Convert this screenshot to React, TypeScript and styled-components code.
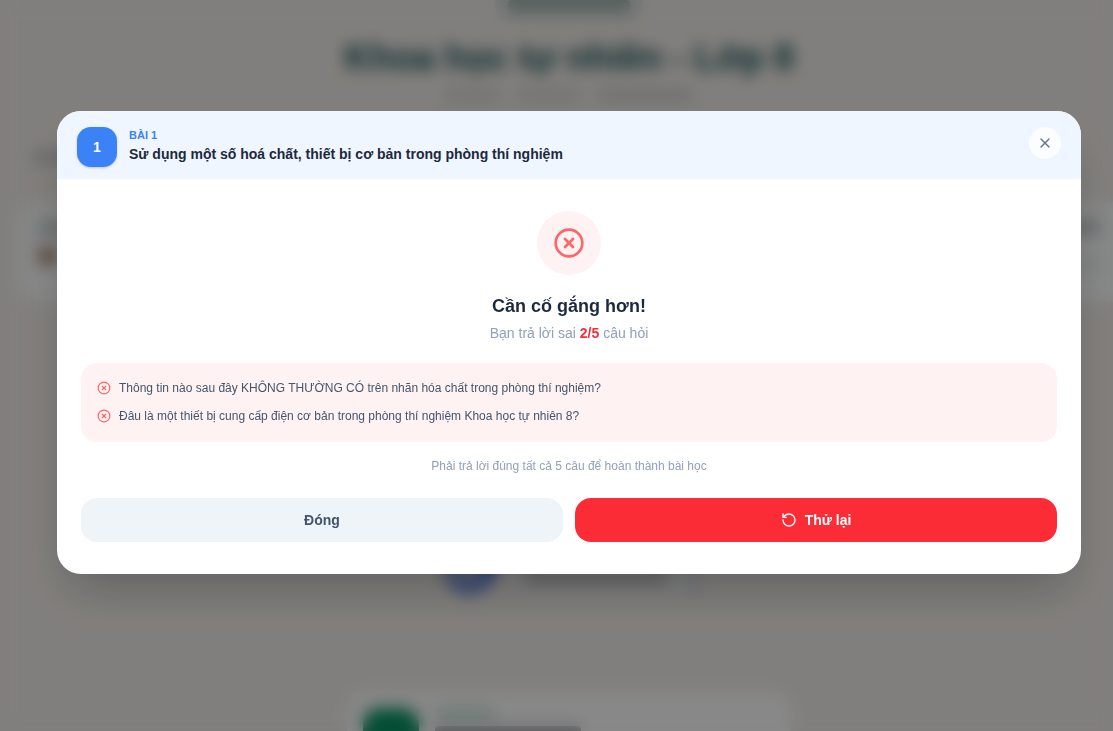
import React from "react";
import styled, { createGlobalStyle } from "styled-components";
import { CircleX, RotateCcw, X } from "lucide-react";

const GlobalStyle = createGlobalStyle`
  *, *::before, *::after { box-sizing: border-box; }
  html, body, #root { height: 100%; }
  body {
    margin: 0;
    overflow: hidden;
    background: #ece8e3;
    font-family: "Liberation Sans", Arial, Helvetica, sans-serif;
    color: #1d293d;
  }
  h1, h2, h3, p, ul { margin: 0; padding: 0; }
  button { font: inherit; border: 0; padding: 0; cursor: pointer; }
`;

const Page = styled.main`
  height: 100%;
  overflow: hidden;
  display: flex;
  flex-direction: column;
  align-items: center;
  padding-left: 25px;
`;

const Badge = styled.div`
  flex: none;
  display: flex;
  justify-content: center;
  width: 148px;
  height: 18px;
  border-radius: 0 0 12px 12px;
  background: #d3dbd8;
`;

const Bar = styled.span<{ $w: number; $h?: number; $color: string }>`
  display: block;
  flex: none;
  width: ${(p) => p.$w}px;
  height: ${(p) => p.$h ?? 10}px;
  border-radius: 4px;
  background: ${(p) => p.$color};
`;

const PageTitle = styled.h1`
  margin-top: 18px;
  font-size: 36px;
  line-height: 44px;
  font-weight: 700;
  white-space: nowrap;
  color: #134e53;
`;

const Meta = styled.div`
  display: flex;
  gap: 14px;
  margin-top: 10px;
`;

const SectionLabel = styled.div`
  align-self: stretch;
  padding: 52px 0 0 8px;
`;

const StatsCard = styled.section`
  align-self: stretch;
  flex: none;
  display: flex;
  justify-content: space-between;
  height: 100px;
  margin: 40px -25px 0 -7px;
  padding: 18px 38px 0 20px;
  border-radius: 20px;
  background: #f6f7f7;
`;

const Stack = styled.div<{ $gap?: number }>`
  display: flex;
  flex-direction: column;
  gap: ${(p) => p.$gap ?? 12}px;
`;

const CurrentLesson = styled.section`
  flex: none;
  display: flex;
  align-items: flex-end;
  gap: 16px;
  width: 256px;
  height: 60px;
  margin-top: 232px;
`;

const Ring = styled.div`
  width: 56px;
  height: 56px;
  border-radius: 50%;
  border: 12px solid #5f83d8;
  border-left-color: #8b9fcb;
  border-right-color: #3f6bdc;
  background: #a9b4cc;
`;

const Bubble = styled.div`
  flex: 1;
  height: 56px;
  padding: 32px 12px 0;
  border-right: 4px solid #b4c2e2;
  background: #e6e7e8;
`;

const NextLesson = styled.section`
  flex: none;
  display: flex;
  gap: 16px;
  width: 444px;
  height: 96px;
  margin-top: 98px;
  padding: 16px;
  border-radius: 20px;
  background: #f8f8f8;
`;

const GreenTile = styled.div`
  width: 56px;
  height: 56px;
  border-radius: 16px;
  background: #0a8f63;
`;

const Overlay = styled.div`
  position: fixed;
  inset: 0;
  display: flex;
  align-items: center;
  justify-content: center;
  padding: 0 32px 46px 57px;
  background: rgba(0, 0, 0, 0.45);
  backdrop-filter: blur(8px);
`;

const Dialog = styled.section`
  width: 100%;
  max-width: 1024px;
  overflow: hidden;
  border-radius: 24px;
  background: #fff;
  box-shadow: 0 25px 50px -12px rgba(0, 0, 0, 0.25);
`;

const Header = styled.header`
  display: flex;
  align-items: flex-start;
  gap: 12px;
  padding: 16px 20px 12px;
  background: #eff6ff;
`;

const LessonNumber = styled.span`
  display: flex;
  align-items: center;
  justify-content: center;
  flex: none;
  width: 40px;
  height: 40px;
  border-radius: 14px;
  background: #3b82f6;
  color: #fff;
  font-size: 14px;
  font-weight: 700;
  box-shadow: 0 1px 3px rgba(0, 0, 0, 0.1), 0 1px 2px rgba(0, 0, 0, 0.1);
`;

const HeaderText = styled.div`
  display: flex;
  flex-direction: column;
  flex: 1;
  gap: 1px;
  min-width: 0;
`;

const Eyebrow = styled.p`
  font-size: 11px;
  line-height: 16px;
  font-weight: 700;
  color: #3b82f6;
`;

const LessonTitle = styled.h2`
  font-size: 14px;
  line-height: 20px;
  font-weight: 700;
`;

const CloseButton = styled.button`
  display: flex;
  align-items: center;
  justify-content: center;
  flex: none;
  width: 32px;
  height: 32px;
  border-radius: 50%;
  background: rgba(255, 255, 255, 0.8);
  color: #62748e;
`;

const Body = styled.div`
  display: flex;
  flex-direction: column;
  align-items: center;
  padding: 32px 24px;
`;

const ResultIcon = styled.div`
  display: flex;
  align-items: center;
  justify-content: center;
  width: 64px;
  height: 64px;
  border-radius: 50%;
  background: #fef2f2;
  color: #ff6467;
`;

const ResultTitle = styled.h3`
  margin-top: 16px;
  font-size: 18px;
  line-height: 30px;
  font-weight: 700;
`;

const ResultText = styled.p`
  margin-top: 2px;
  font-size: 14px;
  line-height: 20px;
  color: #90a1b9;

  strong { color: #fb2c36; }
`;

const MistakeList = styled.ul`
  align-self: stretch;
  display: flex;
  flex-direction: column;
  gap: 9px;
  margin-top: 20px;
  padding: 16px;
  border-radius: 16px;
  background: #fef2f2;
  list-style: none;
`;

const Mistake = styled.li`
  display: flex;
  align-items: flex-start;
  gap: 8px;
  font-size: 12px;
  line-height: 19px;
  color: #45556c;

  svg {
    flex: none;
    margin-top: 2px;
    color: #ff6467;
  }
`;

const Note = styled.p`
  margin-top: 16px;
  font-size: 12px;
  line-height: 16px;
  color: #90a1b9;
`;

const Actions = styled.div`
  align-self: stretch;
  display: grid;
  grid-template-columns: 1fr 1fr;
  gap: 12px;
  margin-top: 24px;
`;

const ActionButton = styled.button<{ $primary?: boolean }>`
  display: flex;
  align-items: center;
  justify-content: center;
  gap: 8px;
  height: 44px;
  border-radius: 16px;
  background: ${(p) => (p.$primary ? "#fb2c36" : "#eff4f8")};
  color: ${(p) => (p.$primary ? "#fff" : "#45556c")};
  font-size: 14px;
  line-height: 20px;
  font-weight: 700;
`;

const mistakes = [
  "Thông tin nào sau đây KHÔNG THƯỜNG CÓ trên nhãn hóa chất trong phòng thí nghiệm?",
  "Đâu là một thiết bị cung cấp điện cơ bản trong phòng thí nghiệm Khoa học tự nhiên 8?",
];

export default function App() {
  return (
    <>
      <GlobalStyle />
      <Page aria-hidden="true">
        <Badge>
          <Bar $w={122} $h={14} $color="#a3b3b0" />
        </Badge>
        <PageTitle>Khoa học tự nhiên - Lớp 8</PageTitle>
        <Meta>
          <Bar $w={58} $color="#cbcac8" />
          <Bar $w={66} $color="#cbcac8" />
          <Bar $w={98} $color="#c6c5c4" />
        </Meta>
        <SectionLabel>
          <Bar $w={90} $color="#b9b9b8" />
        </SectionLabel>
        <StatsCard>
          <Stack>
            <Bar $w={60} $h={16} $color="#c0cbcd" />
            <Bar $w={20} $h={16} $color="#a5846c" />
          </Stack>
          <Stack $gap={26}>
            <Bar $w={40} $h={14} $color="#b9c3c5" />
            <Bar $w={40} $h={10} $color="#e4e7ea" />
          </Stack>
        </StatsCard>
        <CurrentLesson>
          <Ring />
          <Bubble>
            <Bar $w={142} $h={12} $color="#aeafb2" />
          </Bubble>
        </CurrentLesson>
        <NextLesson>
          <GreenTile />
          <Stack $gap={8}>
            <Bar $w={60} $color="#bcdccd" />
            <Bar $w={146} $h={12} $color="#9fa1a6" />
          </Stack>
        </NextLesson>
      </Page>
      <Overlay>
        <Dialog role="dialog" aria-modal="true" aria-labelledby="lesson-title">
          <Header>
            <LessonNumber>1</LessonNumber>
            <HeaderText>
              <Eyebrow>BÀI 1</Eyebrow>
              <LessonTitle id="lesson-title">
                Sử dụng một số hoá chất, thiết bị cơ bản trong phòng thí nghiệm
              </LessonTitle>
            </HeaderText>
            <CloseButton type="button" aria-label="Đóng hộp thoại">
              <X size={16} />
            </CloseButton>
          </Header>
          <Body>
            <ResultIcon>
              <CircleX size={32} />
            </ResultIcon>
            <ResultTitle>Cần cố gắng hơn!</ResultTitle>
            <ResultText>
              Bạn trả lời sai <strong>2/5</strong> câu hỏi
            </ResultText>
            <MistakeList>
              {mistakes.map((text) => (
                <Mistake key={text}>
                  <CircleX size={14} />
                  {text}
                </Mistake>
              ))}
            </MistakeList>
            <Note>Phải trả lời đúng tất cả 5 câu để hoàn thành bài học</Note>
            <Actions>
              <ActionButton type="button">Đóng</ActionButton>
              <ActionButton type="button" $primary>
                <RotateCcw size={16} />
                Thử lại
              </ActionButton>
            </Actions>
          </Body>
        </Dialog>
      </Overlay>
    </>
  );
}
